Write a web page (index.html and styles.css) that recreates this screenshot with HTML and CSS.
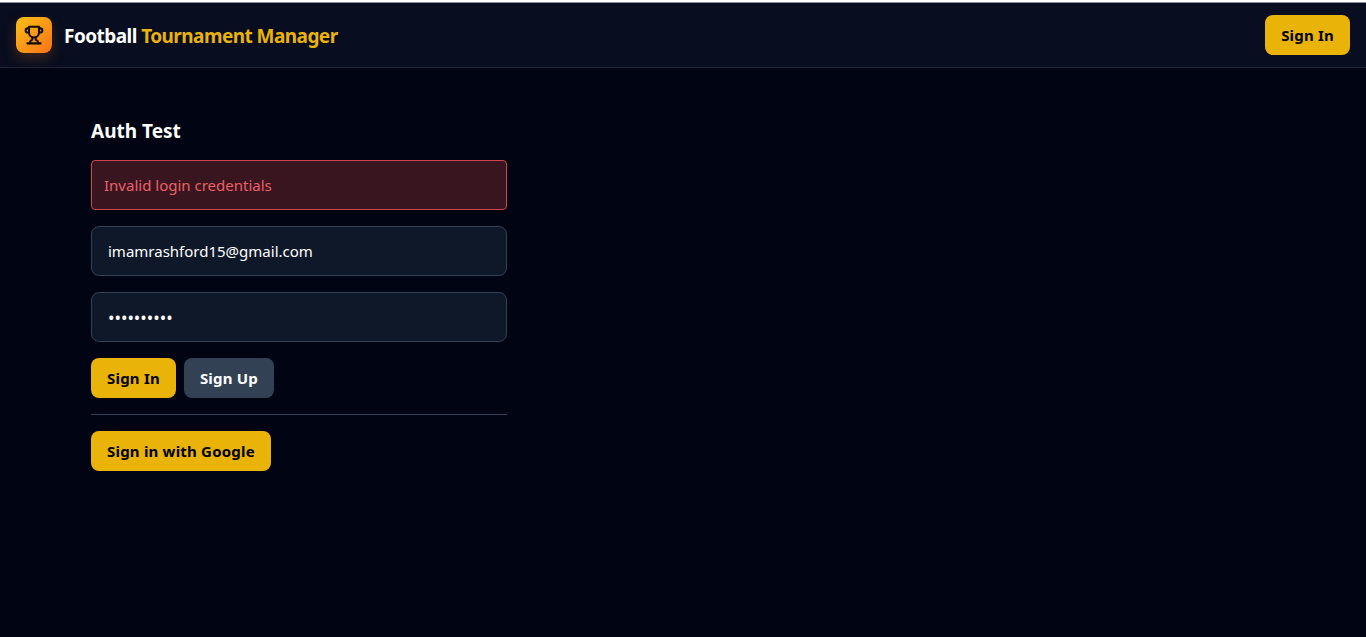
FILE: index.html
```html
<!DOCTYPE html>
<html>
<head>
    <title>Football Tournament Manager</title>
    <link rel="stylesheet" href="styles.css">
</head>
<body>
    <div class="top-strip"></div>
    <header class="navbar">
        <div class="brand">
            <div class="brand-logo">
                <svg width="20" height="20" viewBox="0 0 24 24" fill="none" stroke="#140d04" stroke-width="2.5" stroke-linecap="round" stroke-linejoin="round">
                    <path d="M6 9H4.5a2.5 2.5 0 0 1 0-5H6"></path>
                    <path d="M18 9h1.5a2.5 2.5 0 0 0 0-5H18"></path>
                    <path d="M4 22h16"></path>
                    <path d="M10 14.66V17c0 .55-.47.98-.97 1.21C7.85 18.75 7 20.24 7 22"></path>
                    <path d="M14 14.66V17c0 .55.47.98.97 1.21C16.15 18.75 17 20.24 17 22"></path>
                    <path d="M18 2H6v7a6 6 0 0 0 12 0V2Z"></path>
                </svg>
            </div>
            <div class="brand-name">Football <span class="brand-accent">Tournament Manager</span></div>
        </div>
        <button class="btn btn-yellow">Sign In</button>
    </header>

    <main class="auth-box">
        <h2 class="auth-title">Auth Test</h2>
        <div class="auth-error">Invalid login credentials</div>
        <form class="auth-form">
            <input class="auth-input" type="email" value="imamrashford15@gmail.com">
            <input class="auth-input auth-password" type="password" value="password12">
            <div class="auth-actions">
                <button type="button" class="btn btn-yellow">Sign In</button>
                <button type="button" class="btn btn-slate">Sign Up</button>
            </div>
        </form>
        <hr class="auth-divider">
        <button class="btn btn-yellow">Sign in with Google</button>
    </main>
</body>
</html>
```

FILE: styles.css
```css
* {
    box-sizing: border-box;
}

html, body {
    height: 100%;
}

body {
    margin: 0;
    background-color: #000413;
    color: #fff;
    font-family: "Noto Sans", "Open Sans", sans-serif;
    overflow: hidden;
}

.top-strip {
    height: 3px;
    background: linear-gradient(#fff 2px, #8a8d94 2px);
}

.navbar {
    display: flex;
    align-items: center;
    justify-content: space-between;
    height: 65px;
    padding: 0 16px;
    background-color: #080d1f;
    border-bottom: 1px solid #1d2433;
}

.brand {
    display: flex;
    align-items: center;
    gap: 12px;
}

.brand-logo {
    display: flex;
    align-items: center;
    justify-content: center;
    width: 36px;
    height: 36px;
    border-radius: 8px;
    background: linear-gradient(135deg, #fbbf16, #f97316);
    box-shadow: 0 6px 14px rgba(234, 120, 20, 0.22);
}

.brand-name {
    padding-top: 2px;
    font-size: 19px;
    font-weight: 700;
    letter-spacing: -0.55px;
    color: #fff;
}

.brand-accent {
    color: #eab308;
}

.btn {
    height: 40px;
    padding: 0 16px;
    border: none;
    border-radius: 8px;
    font-family: inherit;
    font-size: 15px;
    font-weight: 700;
    letter-spacing: 0.2px;
    cursor: pointer;
}

.btn-yellow {
    background-color: #eab308;
    color: #000;
}

.btn-slate {
    background-color: #334155;
    color: #fff;
}

.auth-box {
    width: 416px;
    margin-left: 91px;
    padding-top: 48px;
}

.auth-title {
    margin: 0 0 16px;
    padding-top: 1px;
    height: 28px;
    font-size: 19px;
    line-height: 28px;
    font-weight: 700;
}

.auth-error {
    height: 50px;
    margin-bottom: 16px;
    padding: 0 12px;
    display: flex;
    align-items: center;
    background-color: #39151f;
    border: 1px solid #d0454c;
    border-radius: 4px;
    color: #ee6068;
    font-size: 15px;
}

.auth-form {
    display: flex;
    flex-direction: column;
    gap: 16px;
}

.auth-input {
    width: 100%;
    height: 50px;
    padding: 0 16px;
    background-color: #0f1829;
    border: 1px solid #334155;
    border-radius: 8px;
    color: #fff;
    font-family: inherit;
    font-size: 15px;
    outline: none;
}

.auth-password {
    font-size: 17.2px;
}

.auth-actions {
    display: flex;
    gap: 8px;
}

.auth-divider {
    margin: 16px 0;
    border: none;
    border-top: 1px solid #334155;
}
```
